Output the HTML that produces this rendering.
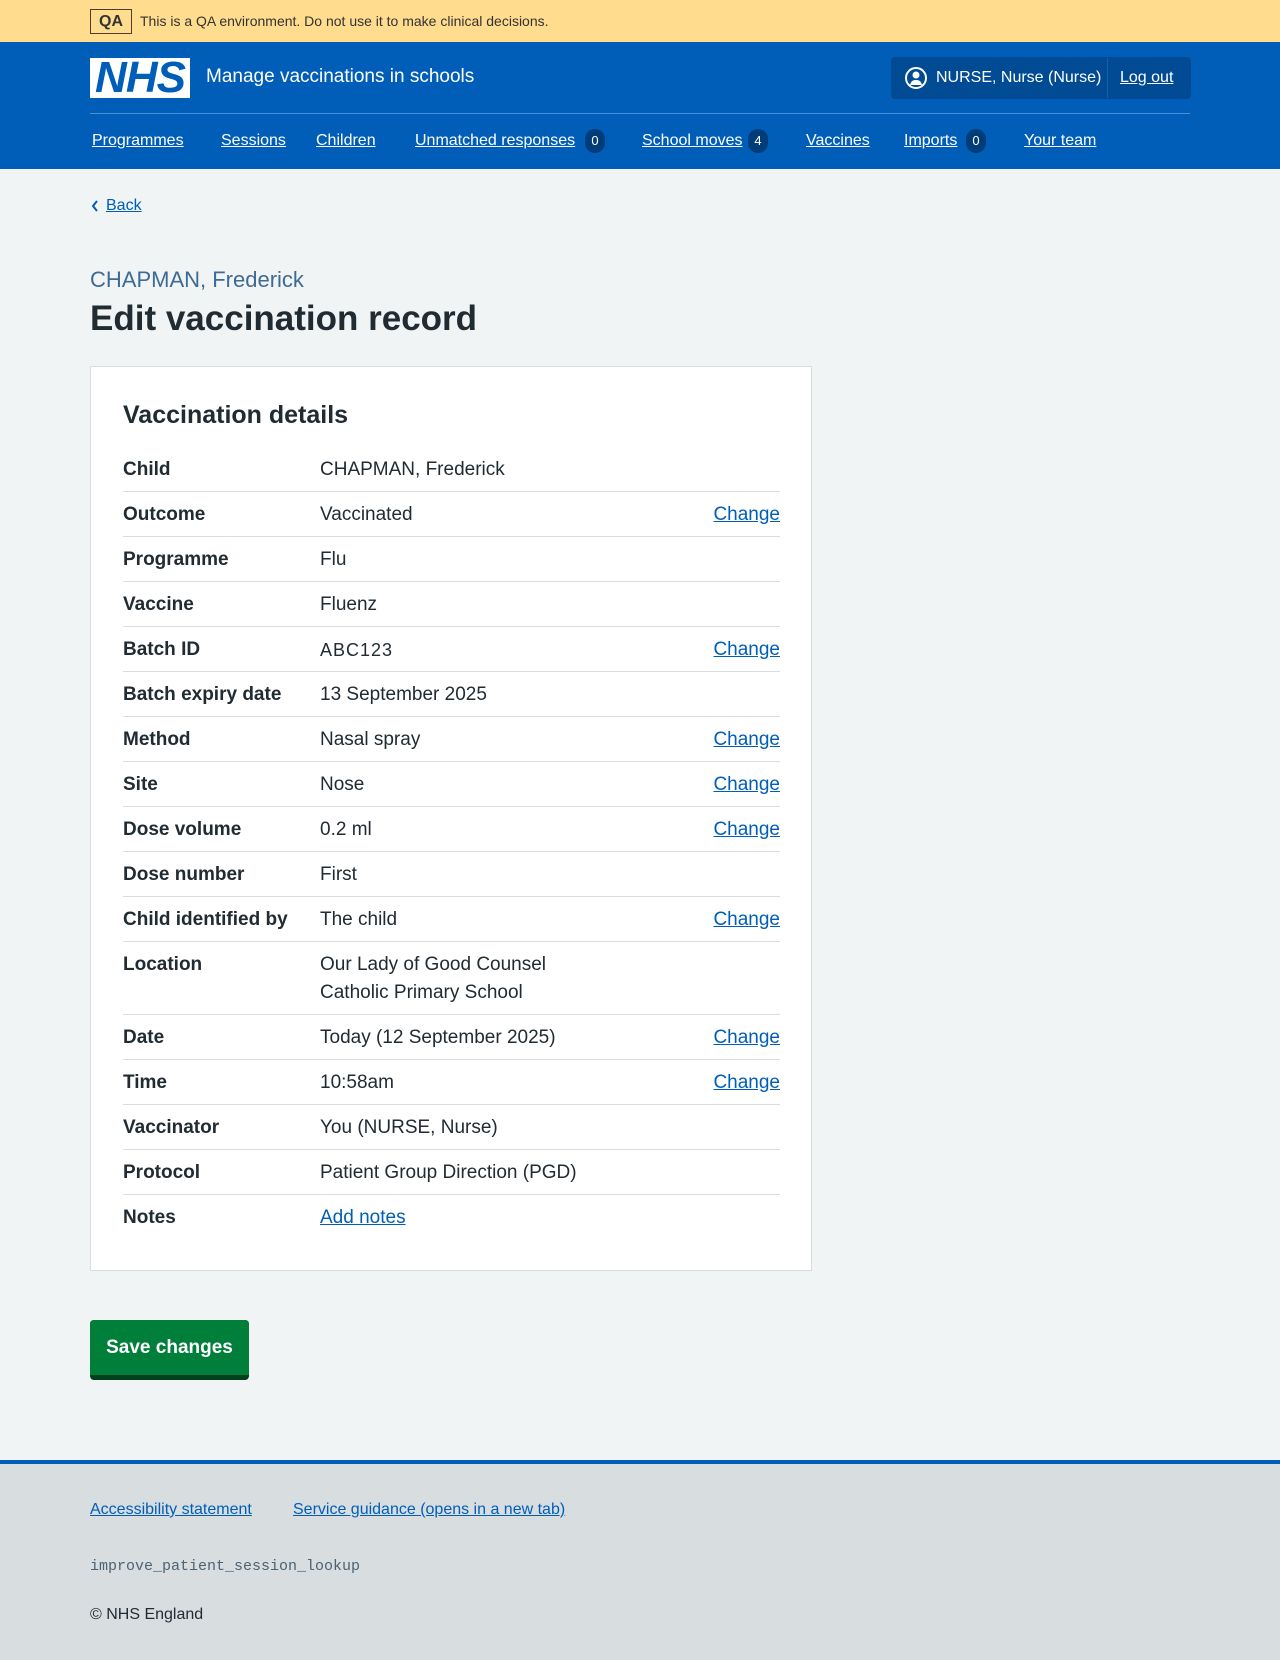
<!DOCTYPE html>
<html><head><meta charset="utf-8"><style>
*{box-sizing:border-box;margin:0;padding:0}
body{width:1280px;height:1660px;background:#f0f4f5;font-family:"Liberation Sans",sans-serif;color:#212b32;position:relative;overflow:hidden}
a{color:#005eb8;text-decoration:underline}
.abs{position:absolute}
.qa{top:0;left:0;width:1280px;height:42px;background:#ffdc8e}
.qabox{left:90px;top:9px;width:42px;height:25px;border:1px solid #4c3f2b;font-size:16px;font-weight:bold;text-align:center;line-height:23px;color:#333}
.qat{left:140px;top:13px;font-size:14px;color:#333}
.hdr{top:42px;left:0;width:1280px;height:127px;background:#005eb8}
.nav a{position:absolute;top:132px;color:#fff;font-size:16px}
.badge{display:inline-block;background:#003d78;color:#fff;border-radius:12px;width:20px;height:24px;font-size:13px;text-align:center;line-height:24px;text-decoration:none;margin-left:3px}
.card{left:90px;top:366px;width:722px;height:905px;background:#fff;border:1px solid #d8dde0}
.row{position:absolute;left:32px;width:657px;height:45px;border-bottom:1px solid #d8dde0;font-size:19px;line-height:28px}
.row .k{position:absolute;left:0;top:9px;font-weight:bold}
.row .v{position:absolute;left:197px;top:9px}
.row .c{position:absolute;right:0;top:9px;color:#005eb8;text-decoration:underline}
</style></head><body>
<div class="abs qa"></div>
<div class="abs qabox">QA</div>
<div class="abs qat">This is a QA environment. Do not use it to make clinical decisions.</div>
<div class="abs hdr"></div>
<div class="abs" style="left:90px;top:58px;width:100px;height:40px;background:#fff"></div>
<div class="abs" style="left:90px;top:55px;width:100px;height:46px;color:#005eb8;font-size:44px;font-weight:bold;font-style:italic;text-align:center;letter-spacing:-1px;line-height:46px">NHS</div>
<div class="abs" style="left:206px;top:66px;color:#fff;font-size:19px">Manage vaccinations in schools</div>
<div class="abs" style="left:891px;top:57px;width:300px;height:42px;background:#004b93;border-radius:4px"></div>
<div class="abs" style="left:1107px;top:58px;width:1px;height:40px;background:#1a5fa5"></div>
<svg class="abs" style="left:905px;top:66px" width="22" height="24" viewBox="0 0 22 24"><circle cx="11" cy="12" r="10" fill="none" stroke="#fff" stroke-width="2"/><circle cx="11" cy="9" r="3.5" fill="#fff"/><path d="M5 19c1-4 3-5 6-5s5 1 6 5z" fill="#fff"/></svg>
<div class="abs" style="left:936px;top:69px;color:#fff;font-size:16px">NURSE, Nurse (Nurse)</div>
<a class="abs" style="left:1120px;top:69px;color:#fff;font-size:16px">Log out</a>
<div class="abs" style="left:90px;top:113px;width:1100px;height:1px;background:#4c8ed4"></div>
<div class="nav">
<a style="left:92px">Programmes</a>
<a style="left:221px">Sessions</a>
<a style="left:316px">Children</a>
<a style="left:415px">Unmatched responses</a><span class="abs badge" style="left:582px;top:129px">0</span>
<a style="left:642px">School moves</a><span class="abs badge" style="left:745px;top:129px">4</span>
<a style="left:806px">Vaccines</a>
<a style="left:904px">Imports</a><span class="abs badge" style="left:963px;top:129px">0</span>
<a style="left:1024px">Your team</a>
</div>
<svg class="abs" style="left:90px;top:199px" width="10" height="14"><path d="M7 2L3 7l4 5" fill="none" stroke="#005eb8" stroke-width="2"/></svg>
<a class="abs" style="left:106px;top:197px;font-size:16px">Back</a>
<div class="abs" style="left:90px;top:267px;font-size:22px;color:#3f6a94">CHAPMAN, Frederick</div>
<div class="abs" style="left:90px;top:299px;font-size:35px;font-weight:bold">Edit vaccination record</div>
<div class="abs card">
<div class="abs" style="left:32px;top:34px;font-size:25px;font-weight:bold">Vaccination details</div>
<div class="row" style="top:80px"><span class="k">Child</span><span class="v">CHAPMAN, Frederick</span></div>
<div class="row" style="top:125px"><span class="k">Outcome</span><span class="v">Vaccinated</span><span class="c">Change</span></div>
<div class="row" style="top:170px"><span class="k">Programme</span><span class="v">Flu</span></div>
<div class="row" style="top:215px"><span class="k">Vaccine</span><span class="v">Fluenz</span></div>
<div class="row" style="top:260px"><span class="k">Batch ID</span><span class="v" style="letter-spacing:1px;font-size:18px">ABC123</span><span class="c">Change</span></div>
<div class="row" style="top:305px"><span class="k">Batch expiry date</span><span class="v">13 September 2025</span></div>
<div class="row" style="top:350px"><span class="k">Method</span><span class="v">Nasal spray</span><span class="c">Change</span></div>
<div class="row" style="top:395px"><span class="k">Site</span><span class="v">Nose</span><span class="c">Change</span></div>
<div class="row" style="top:440px"><span class="k">Dose volume</span><span class="v">0.2 ml</span><span class="c">Change</span></div>
<div class="row" style="top:485px"><span class="k">Dose number</span><span class="v">First</span></div>
<div class="row" style="top:530px"><span class="k">Child identified by</span><span class="v">The child</span><span class="c">Change</span></div>
<div class="row" style="top:575px;height:73px"><span class="k">Location</span><span class="v">Our Lady of Good Counsel<br>Catholic Primary School</span></div>
<div class="row" style="top:648px"><span class="k">Date</span><span class="v">Today (12 September 2025)</span><span class="c">Change</span></div>
<div class="row" style="top:693px"><span class="k">Time</span><span class="v">10:58am</span><span class="c">Change</span></div>
<div class="row" style="top:738px"><span class="k">Vaccinator</span><span class="v">You (NURSE, Nurse)</span></div>
<div class="row" style="top:783px"><span class="k">Protocol</span><span class="v">Patient Group Direction (PGD)</span></div>
<div class="row" style="top:828px;border-bottom:none"><span class="k">Notes</span><span class="v" style="color:#005eb8;text-decoration:underline">Add notes</span></div>
</div>
<div class="abs" style="left:90px;top:1320px;width:159px;height:60px;background:#00401e;border-radius:4px"></div>
<div class="abs" style="left:90px;top:1320px;width:159px;height:55px;background:#007f3b;border-radius:4px 4px 0 0;color:#fff;font-size:19px;font-weight:bold;text-align:center;line-height:55px">Save changes</div>
<div class="abs" style="left:0;top:1460px;width:1280px;height:200px;background:#d8dde0;border-top:4px solid #005eb8"></div>
<a class="abs" style="left:90px;top:1501px;font-size:16px">Accessibility statement</a>
<a class="abs" style="left:293px;top:1501px;font-size:16px">Service guidance (opens in a new tab)</a>
<div class="abs" style="left:90px;top:1558px;font-family:'Liberation Mono',monospace;font-size:15px;color:#4c6272">improve_patient_session_lookup</div>
<div class="abs" style="left:90px;top:1606px;font-size:16px">© NHS England</div>
</body></html>
